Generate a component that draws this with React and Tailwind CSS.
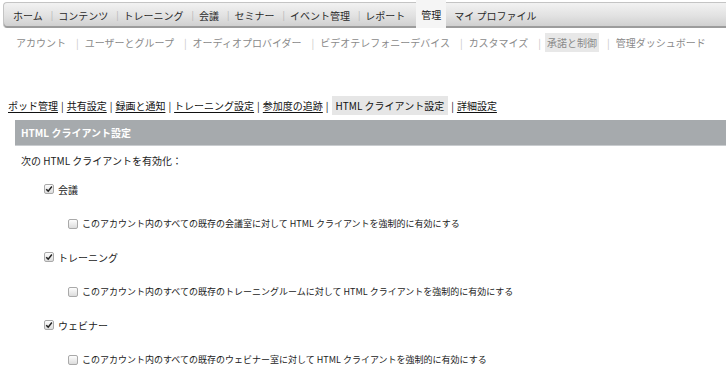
import React from 'react';

const mainNav = ['ホーム', 'コンテンツ', 'トレーニング', '会議', 'セミナー', 'イベント管理', 'レポート'];
const subNav = ['アカウント', 'ユーザーとグループ', 'オーディオプロバイダー', 'ビデオテレフォニーデバイス', 'カスタマイズ', '承諾と制御', '管理ダッシュボード'];
const tabs = ['ポッド管理', '共有設定', '録画と通知', 'トレーニング設定', '参加度の追跡', 'HTML クライアント設定', '詳細設定'];

const options = [
  { label: '会議', sub: 'このアカウント内のすべての既存の会議室に対して HTML クライアントを強制的に有効にする' },
  { label: 'トレーニング', sub: 'このアカウント内のすべての既存のトレーニングルームに対して HTML クライアントを強制的に有効にする' },
  { label: 'ウェビナー', sub: 'このアカウント内のすべての既存のウェビナー室に対して HTML クライアントを強制的に有効にする' },
];

const Box = ({ checked }) => (
  <span className="inline-flex w-[10px] h-[10px] items-center justify-center border border-[#a9a9a9] rounded-[2px] bg-gradient-to-b from-[#fdfdfd] to-[#dcdcdc] shrink-0">
    {checked && (
      <svg viewBox="0 0 10 10" className="w-[8px] h-[8px]">
        <path d="M1.5 5.2 L4 7.6 L8.6 1.8" fill="none" stroke="#222" strokeWidth="1.8" />
      </svg>
    )}
  </span>
);

const App = () => {
  return (
    <div className="w-[726px] h-[374px] overflow-hidden bg-white text-[#222] whitespace-nowrap font-['Noto_Sans_CJK_JP',sans-serif]">
      {/* Main nav */}
      <div className="mt-[2px] ml-[3px] h-[26px] flex items-stretch rounded-l-[4px] border-l border-t border-[#c4c4c4] bg-gradient-to-b from-[#f2f2f2] via-[#e2e2e2] to-[#cdcdcd] shadow-[inset_0_-2px_0_#9c9c9c]">
        <div className="flex items-center pl-[9px] text-[10px] text-[#2a2a2a]">
          {mainNav.map((item, i) => (
            <React.Fragment key={item}>
              {i > 0 && <span className="text-[#b5b5b5] text-[9px] pl-[8px] pr-[5px]">|</span>}
              <span>{item}</span>
            </React.Fragment>
          ))}
        </div>
        <div className="ml-[11px] -mt-[3px] px-[5px] flex items-center pt-[3px] bg-[#f5f5f5] text-[10px] text-[#222] border-b-2 border-[#f5f5f5]">管理</div>
        <div className="flex items-center pl-[8px] text-[10px] text-[#2a2a2a]">マイ プロファイル</div>
      </div>

      {/* Sub nav */}
      <div className="mt-[5px] h-[19px] pl-[16px] flex items-center text-[10px] text-[#8a8a8a]">
        {subNav.map((item, i) => (
          <React.Fragment key={item}>
            {i > 0 && <span className="text-[#c8c8c8] pl-[10px] pr-[6px]">|</span>}
            <span className={item === '承諾と制御' ? 'bg-[#e8e8e8] px-[2px] -mx-[2px] leading-[19px]' : ''}>{item}</span>
          </React.Fragment>
        ))}
      </div>

      {/* Tabs */}
      <div className="mt-[44px] h-[19px] pl-[8px] flex items-center text-[10px] text-[#111]">
        {tabs.map((item, i) => (
          <React.Fragment key={item}>
            {i > 0 && <span className="px-[3px]">|</span>}
            {item === 'HTML クライアント設定' ? (
              <span className="bg-[#e6e6e6] px-[4px] leading-[19px]">{item}</span>
            ) : (
              <span className="underline underline-offset-2">{item}</span>
            )}
          </React.Fragment>
        ))}
      </div>

      {/* Section header */}
      <div className="mt-[5px] ml-[15px] h-[26px] bg-[#a6aaad] border-b border-[#c9cccf] flex items-center pl-[6px] text-[10px] font-bold text-white">
        HTML クライアント設定
      </div>

      <div className="mt-[4px] h-[20px] pl-[21px] flex items-center text-[10px] text-[#222]">次の HTML クライアントを有効化：</div>

      {options.map((opt, i) => (
        <div key={opt.label}>
          <div className={`${i === 0 ? 'mt-[9px]' : 'mt-[13px]'} h-[20px] pl-[44px] flex items-center gap-[4px] text-[10px]`}>
            <Box checked />
            <span>{opt.label}</span>
          </div>
          <div className="mt-[15px] h-[20px] pl-[68px] flex items-center gap-[4px] text-[9px]">
            <Box />
            <span>{opt.sub}</span>
          </div>
        </div>
      ))}
    </div>
  );
};

export default App;
